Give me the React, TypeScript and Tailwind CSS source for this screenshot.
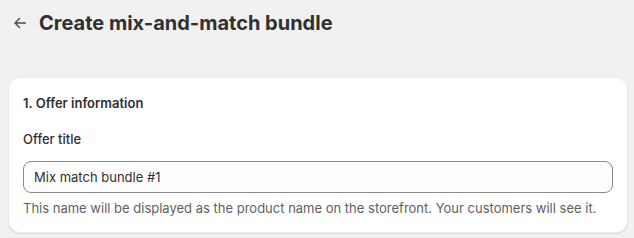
import React from "react";

export default function App() {
  return (
    <div
      className="min-h-[238px] w-full bg-[#f1f1f1] text-[#303030]"
      style={{ fontFamily: "Inter, 'Noto Sans', sans-serif" }}
    >
      <div className="flex items-center gap-[12px] pl-[13px] pt-[12px] h-[34px]">
        <svg width="14" height="14" viewBox="0 0 14 14" fill="none" className="text-[#4a4a4a]">
          <path d="M12.5 7H2M6.5 2.5L2 7l4.5 4.5" stroke="currentColor" strokeWidth="1.4" strokeLinecap="round" strokeLinejoin="round" />
        </svg>
        <h1 className="text-[20px] leading-[24px] font-bold text-[#303030]">
          Create mix-and-match bundle
        </h1>
      </div>
      <div className="ml-2 mr-[6px] mt-[43px] rounded-[12px] bg-white border border-[#ebebeb] shadow-[0_1px_0_0_rgba(26,26,26,0.1)] px-[14px] pt-[15px] pb-[14px]">
        <div className="text-[13px] leading-[20px] font-semibold text-[#303030]">1. Offer information</div>
        <div className="mt-[16px] text-[13px] leading-[20px] font-medium text-[#303030]">Offer title</div>
        <div className="mt-[12px] h-[32px] rounded-[8px] border border-[#8a8a8a] bg-[#fdfdfd] flex items-center px-[10px]">
          <span className="text-[13px] leading-[20px] text-[#303030]">Mix match bundle #1</span>
        </div>
        <div className="mt-[5px] text-[13px] leading-[20px] text-[#616161]">
          This name will be displayed as the product name on the storefront. Your customers will see it.
        </div>
      </div>
    </div>
  );
}
